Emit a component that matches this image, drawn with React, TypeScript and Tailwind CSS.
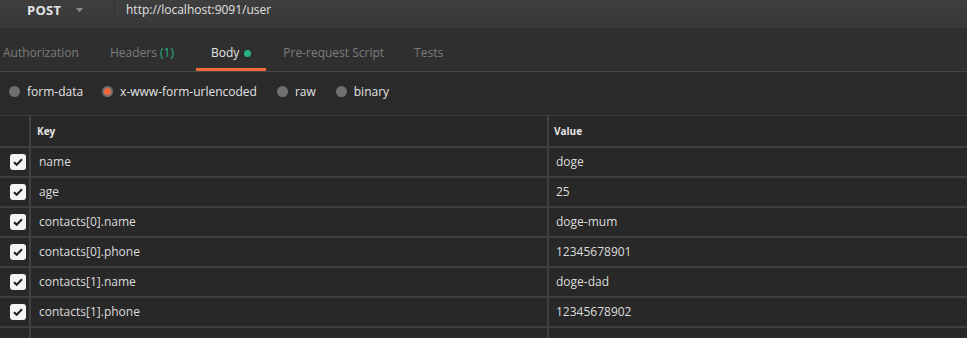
import React from "react";

const rows = [
  ["name", "doge"],
  ["age", "25"],
  ["contacts[0].name", "doge-mum"],
  ["contacts[0].phone", "12345678901"],
  ["contacts[1].name", "doge-dad"],
  ["contacts[1].phone", "12345678902"],
];

function Check() {
  return (
    <div className="w-4 h-4 rounded-[3px] bg-[#f4f4f4] flex items-center justify-center">
      <svg width="10" height="8" viewBox="0 0 10 8">
        <path d="M1 4.2 L3.7 6.8 L9 1.2" fill="none" stroke="#1e1e1e" strokeWidth="2" />
      </svg>
    </div>
  );
}

function Radio({ on, label, className }: { on?: boolean; label: string; className?: string }) {
  return (
    <div className={"flex items-center " + (className ?? "")}>
      <div className="w-[11px] h-[11px] rounded-full bg-[#6f6f6f] flex items-center justify-center">
        {on && <div className="w-[7px] h-[7px] rounded-full bg-[#f0683a]" />}
      </div>
      <span className="ml-[7px] text-[12px] text-[#e2e2e2]">{label}</span>
    </div>
  );
}

export default function App() {
  return (
    <div
      className="w-[967px] h-[338px] overflow-hidden bg-[#282828]"
      style={{ fontFamily: '"Open Sans", "Noto Sans", sans-serif' }}
    >
      {/* top bar */}
      <div className="h-[28px] flex bg-gradient-to-b from-[#3e3e3e] to-[#383838]">
        <div className="w-[115px] flex items-center border-r border-[#333] pl-[27px] pb-[7px]">
          <span className="text-[13px] font-bold text-[#e4e4e4] tracking-[0.3px]">POST</span>
          <svg className="ml-[15px]" width="7" height="5" viewBox="0 0 7 5">
            <path d="M0 0 L7 0 L3.5 4.5 Z" fill="#8a8a8a" />
          </svg>
        </div>
        <div className="flex items-center pl-[11px] pb-[8px] text-[12px] text-[#e0e0e0]">
          http://localhost:9091/user
        </div>
      </div>

      {/* tabs */}
      <div className="h-[44px] flex items-end bg-[#2f2f2f] border-b border-[#454545]">
        <div className="flex h-full -ml-[12px]">
          <div className="px-[15px] pt-[7px] flex items-center text-[12px] text-[#7c7c7c]">Authorization</div>
          <div className="ml-[1px] px-[15px] pt-[7px] flex items-center text-[12px] text-[#7c7c7c]">
            Headers&nbsp;<span className="text-[#26b47f]">(1)</span>
          </div>
          <div className="ml-[7px] px-[15px] pt-[7px] flex items-center text-[12px] text-[#e4e4e4] relative">
            Body
            <span className="ml-[5px] w-[7px] h-[7px] rounded-full bg-[#26b47f]" />
            <div className="absolute left-0 right-0 bottom-0 h-[3px] bg-[#f26b3a]" />
          </div>
          <div className="ml-[2px] px-[15px] pt-[7px] flex items-center text-[12px] text-[#7c7c7c]">Pre-request Script</div>
          <div className="px-[15px] pt-[7px] flex items-center text-[12px] text-[#7c7c7c]">Tests</div>
        </div>
      </div>

      {/* radio row */}
      <div className="h-[43px] flex items-center pl-[9px] bg-[#2a2a2a] pb-[4px]">
        <Radio label="form-data" />
        <Radio on label="x-www-form-urlencoded" className="ml-[19px]" />
        <Radio label="raw" className="ml-[20px]" />
        <Radio label="binary" className="ml-[20px]" />
      </div>

      {/* table */}
      <div className="border-t border-[#3c3c3c]">
        <div className="h-[32px] flex border-b-2 border-[#404040]">
          <div className="w-[31px] border-r-2 border-[#404040]" />
          <div className="w-[518px] border-r-2 border-[#404040] flex items-center pl-[6px] text-[10px] font-bold text-[#e6e6e6]">
            Key
          </div>
          <div className="flex-1 flex items-center pl-[5px] text-[10px] font-bold text-[#e6e6e6]">Value</div>
        </div>
        {rows.map(([k, v]) => (
          <div key={k} className="h-[30px] flex border-b-2 border-[#404040]">
            <div className="w-[31px] border-r-2 border-[#404040] flex items-center pl-[10px]">
              <Check />
            </div>
            <div className="w-[518px] border-r-2 border-[#404040] flex items-center pl-[8px] text-[12px] text-[#dcdcdc]">
              {k}
            </div>
            <div className="flex-1 flex items-center pl-[7px] text-[12px] text-[#dcdcdc]">{v}</div>
          </div>
        ))}
        <div className="h-[30px] flex">
          <div className="w-[31px] border-r-2 border-[#404040]" />
          <div className="w-[518px] border-r-2 border-[#404040]" />
        </div>
      </div>
    </div>
  );
}
